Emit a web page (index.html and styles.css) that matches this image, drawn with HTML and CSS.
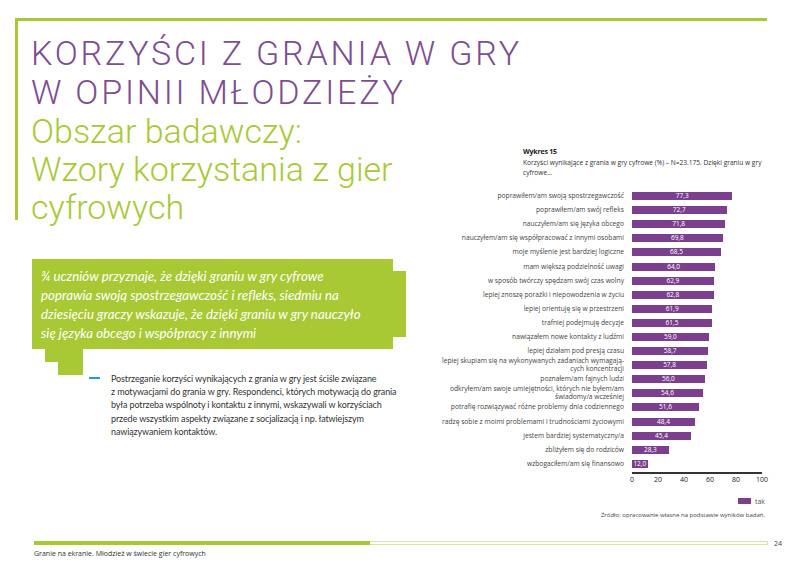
FILE: index.html
```html
<!DOCTYPE html>
<html lang="pl">
<head>
<meta charset="utf-8">
<title>Korzyści z grania w gry</title>
<link rel="stylesheet" href="styles.css">
</head>
<body>
<div class="page">
  <div class="main">
    <section class="left">
      <header class="heading">
        <h1>KORZYŚCI Z GRANIA W GRY<br>W OPINII MŁODZIEŻY</h1>
        <h2>Obszar badawczy:<br>Wzory korzystania z gier<br>cyfrowych</h2>
      </header>
      <blockquote class="quote">¾ uczniów przyznaje, że dzięki graniu w gry cyfrowe<br>poprawia swoją spostrzegawczość i refleks, siedmiu na<br>dziesięciu graczy wskazuje, że dzięki graniu w gry nauczyło<br>się języka obcego i współpracy z innymi</blockquote>
      <div class="body">
        <span class="dash"></span>
        <p>Postrzeganie korzyści wynikających z grania w gry jest ściśle związane<br>z motywacjami do grania w gry. Respondenci, których motywacją do grania<br>była potrzeba wspólnoty i kontaktu z innymi, wskazywali w korzyściach<br>przede wszystkim aspekty związane z socjalizacją i np. łatwiejszym<br>nawiązywaniem kontaktów.</p>
      </div>
    </section>
    <section class="right">
      <div class="chart-head">
        <div class="chart-title">Wykres 15</div>
        <div class="chart-caption">Korzyści wynikające z grania w gry cyfrowe (%) – N=23.175. Dzięki graniu w gry<br>cyfrowe...</div>
      </div>
      <div class="chart">
        <div class="row"><span class="label">poprawiłem/am swoją spostrzegawczość</span><span class="track"><span class="bar" style="width:77.3%">77,3</span></span></div>
        <div class="row"><span class="label">poprawiłem/am swój refleks</span><span class="track"><span class="bar" style="width:72.7%">72,7</span></span></div>
        <div class="row"><span class="label">nauczyłem/am się języka obcego</span><span class="track"><span class="bar" style="width:71.8%">71,8</span></span></div>
        <div class="row"><span class="label">nauczyłem/am się współpracować z innymi osobami</span><span class="track"><span class="bar" style="width:69.8%">69,8</span></span></div>
        <div class="row"><span class="label">moje myślenie jest bardziej logiczne</span><span class="track"><span class="bar" style="width:68.5%">68,5</span></span></div>
        <div class="row"><span class="label">mam większą podzielność uwagi</span><span class="track"><span class="bar" style="width:64%">64,0</span></span></div>
        <div class="row"><span class="label">w sposób twórczy spędzam swój czas wolny</span><span class="track"><span class="bar" style="width:62.9%">62,9</span></span></div>
        <div class="row"><span class="label">lepiej znoszę porażki i niepowodzenia w życiu</span><span class="track"><span class="bar" style="width:62.8%">62,8</span></span></div>
        <div class="row"><span class="label">lepiej orientuję się w przestrzeni</span><span class="track"><span class="bar" style="width:61.9%">61,9</span></span></div>
        <div class="row"><span class="label">trafniej podejmuję decyzje</span><span class="track"><span class="bar" style="width:61.5%">61,5</span></span></div>
        <div class="row"><span class="label">nawiązałem nowe kontakty z ludźmi</span><span class="track"><span class="bar" style="width:59%">59,0</span></span></div>
        <div class="row"><span class="label">lepiej działam pod presją czasu</span><span class="track"><span class="bar" style="width:58.7%">58,7</span></span></div>
        <div class="row"><span class="label">lepiej skupiam się na wykonywanych zadaniach wymagają-<br>cych koncentracji</span><span class="track"><span class="bar" style="width:57.8%">57,8</span></span></div>
        <div class="row"><span class="label">poznałem/am fajnych ludzi</span><span class="track"><span class="bar" style="width:56%">56,0</span></span></div>
        <div class="row"><span class="label">odkryłem/am swoje umiejętności, których nie byłem/am<br>świadomy/a wcześniej</span><span class="track"><span class="bar" style="width:54.6%">54,6</span></span></div>
        <div class="row"><span class="label">potrafię rozwiązywać różne problemy dnia codziennego</span><span class="track"><span class="bar" style="width:51.6%">51,6</span></span></div>
        <div class="row"><span class="label">radzę sobie z moimi problemami i trudnościami życiowymi</span><span class="track"><span class="bar" style="width:48.4%">48,4</span></span></div>
        <div class="row"><span class="label">jestem bardziej systematyczny/a</span><span class="track"><span class="bar" style="width:45.4%">45,4</span></span></div>
        <div class="row"><span class="label">zbliżyłem się do rodziców</span><span class="track"><span class="bar" style="width:28.3%">28,3</span></span></div>
        <div class="row"><span class="label">wzbogaciłem/am się finansowo</span><span class="track"><span class="bar" style="width:12%">12,0</span></span></div>
        <div class="axis">
          <span>0</span><span>20</span><span>40</span><span>60</span><span>80</span><span>100</span>
        </div>
      </div>
      <div class="legend"><span class="swatch"></span>tak</div>
      <div class="source">Źródło: opracowanie własne na podstawie wyników badań.</div>
    </section>
  </div>
  <footer class="footer">
    <div class="footer-rule">
      <span class="rule-solid"></span><span class="rule-light"></span>
      <span class="page-no">24</span>
    </div>
    <div class="footer-text">Granie na ekranie. Młodzież w świecie gier cyfrowych</div>
  </footer>
</div>
</body>
</html>
```
FILE: styles.css
```css
* { box-sizing: border-box; }
html, body { margin: 0; padding: 0; background: #fff; }
body { font-family: "Open Sans", "Liberation Sans", sans-serif; color: #333; }

.page {
  width: 800px;
  height: 566px;
  overflow: hidden;
  display: flex;
  flex-direction: column;
}

.main {
  margin: 18px 33px 0 15px;
  border-top: 3px solid #a9c934;
  display: grid;
  grid-template-columns: 425px 1fr;
  flex: 1;
}

/* ---------- left column ---------- */
.heading {
  border-left: 3px solid #a9c934;
  height: 199px;
  padding: 13px 0 0 13px;
}
.heading h1 {
  margin: 0;
  font-family: Roboto, "Open Sans", sans-serif;
  font-weight: 300;
  font-size: 34px;
  line-height: 39px;
  letter-spacing: 2.8px;
  color: #7d4e91;
  white-space: nowrap;
}
.heading h2 {
  margin: 0;
  font-family: Roboto, "Open Sans", sans-serif;
  font-weight: 300;
  font-size: 34px;
  line-height: 38px;
  color: #a9c934;
  white-space: nowrap;
}

.quote {
  position: relative;
  margin: 39px 0 0 17px;
  width: 361px;
  height: 90px;
  padding: 8px 0 0 9px;
  background: #a9c934;
  color: #fff;
  font-family: Lato, "Open Sans", sans-serif;
  font-style: italic;
  font-weight: 400;
  font-size: 13.3px;
  line-height: 19px;
  white-space: nowrap;
}
.quote::before {
  content: "";
  position: absolute;
  left: 100%;
  top: 12px;
  width: 13px;
  height: 66px;
  background: #a9c934;
}
.quote::after {
  content: "";
  position: absolute;
  left: 13px;
  top: 100%;
  width: 38px;
  height: 26px;
  background: #a9c934;
  clip-path: polygon(0 0, 100% 0, 100% 100%, 13px 100%, 13px 13px, 0 13px);
}

.body {
  display: flex;
  align-items: flex-start;
  margin: 23px 0 0 74px;
}
.dash {
  width: 11px;
  height: 2px;
  background: #1fa0dc;
  margin: 5px 11px 0 0;
  flex: none;
}
.body p {
  margin: 0;
  font-family: Lato, "Open Sans", sans-serif;
  font-size: 9px;
  letter-spacing: -0.12px;
  line-height: 13.2px;
  color: #333;
  white-space: nowrap;
}

/* ---------- right column ---------- */
.right {
  padding-top: 126px;
  font-family: "Open Sans", "Liberation Sans", sans-serif;
}
.chart-head { margin-left: 83px; }
.chart-title {
  font-weight: 700;
  font-size: 7px;
  line-height: 10px;
  color: #222;
  letter-spacing: -0.2px;
}
.chart-caption {
  margin-top: 1px;
  font-size: 6.6px;
  line-height: 10px;
  color: #333;
  white-space: nowrap;
}

.chart {
  margin-top: 11px;
  display: grid;
  grid-template-columns: 184px 130px;
  column-gap: 8px;
}
.row {
  display: contents;
}
.label {
  height: 14.1px;
  display: flex;
  align-items: center;
  justify-content: flex-end;
  text-align: right;
  font-size: 6.7px;
  line-height: 8px;
  color: #444;
  white-space: nowrap;
}
.track {
  height: 14.1px;
  display: flex;
  align-items: center;
}
.bar {
  display: block;
  height: 8px;
  background: #7b3f8d;
  color: #fff;
  font-size: 6.5px;
  line-height: 8px;
  text-align: center;
}

.axis {
  grid-column: 2;
  border-top: 2px solid #333;
  margin-top: 1px;
  display: flex;
  justify-content: space-between;
  font-size: 7px;
  line-height: 10px;
  color: #222;
  padding-top: 1px;
}
.axis span { width: 0; display: flex; justify-content: center; white-space: nowrap; }

.legend {
  margin-top: 12px;
  display: flex;
  align-items: center;
  justify-content: flex-end;
  padding-right: 2px;
  font-size: 7px;
  color: #555;
}
.swatch {
  width: 13px;
  height: 6px;
  background: #7b3f8d;
  margin-right: 4px;
}
.source {
  margin-top: 5px;
  text-align: right;
  padding-right: 2px;
  font-size: 6px;
  color: #444;
  white-space: nowrap;
}

/* ---------- footer ---------- */
.footer {
  margin: 0 0 7px 34px;
}
.footer-rule {
  display: flex;
  align-items: center;
  height: 6px;
}
.rule-solid {
  width: 336px;
  height: 4px;
  background: #a9c934;
}
.rule-light {
  width: 398px;
  height: 4px;
  border: 1px solid #d7e5a2;
  border-left: none;
}
.page-no {
  margin-left: 6px;
  font-size: 7px;
  color: #444;
}
.footer-text {
  margin-top: 3px;
  font-size: 7px;
  line-height: 10px;
  color: #333;
}
```
